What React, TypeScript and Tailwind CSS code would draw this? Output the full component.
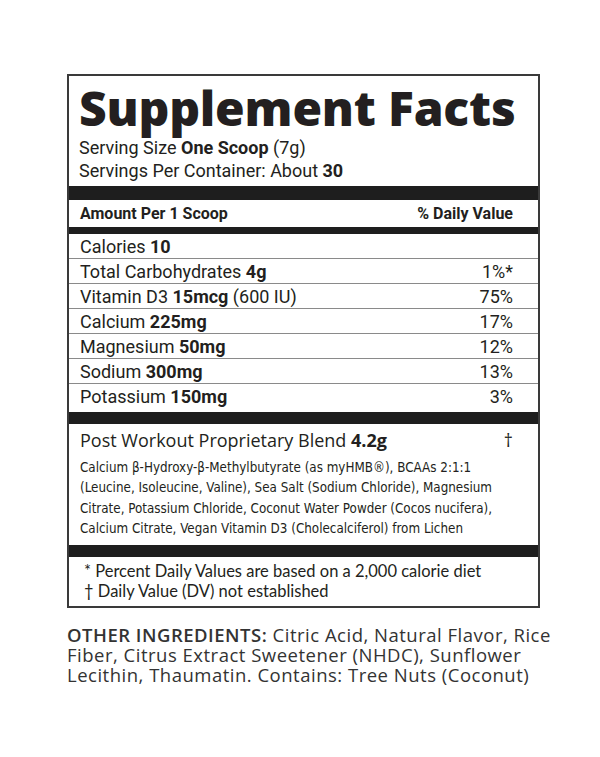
import React from 'react';

const nutrients = [
  { name: 'Calories', amount: '10', dv: '' },
  { name: 'Total Carbohydrates', amount: '4g', dv: '1%*' },
  { name: 'Vitamin D3', amount: '15mcg', extra: ' (600 IU)', dv: '75%' },
  { name: 'Calcium', amount: '225mg', dv: '17%' },
  { name: 'Magnesium', amount: '50mg', dv: '12%' },
  { name: 'Sodium', amount: '300mg', dv: '13%' },
  { name: 'Potassium', amount: '150mg', dv: '3%' },
];

const blendLines = [
  'Calcium β-Hydroxy-β-Methylbutyrate (as myHMB®), BCAAs 2:1:1',
  '(Leucine, Isoleucine, Valine), Sea Salt (Sodium Chloride), Magnesium',
  'Citrate, Potassium Chloride, Coconut Water Powder (Cocos nucifera),',
  'Calcium Citrate, Vegan Vitamin D3 (Cholecalciferol) from Lichen',
];

const App: React.FC = () => {
  return (
    <div className="min-h-[757px] bg-white pt-[74px] pl-[67px] text-[#231f20]">
      <div className="w-[473px] border-2 border-[#3a3a3a] font-['Roboto',sans-serif]">
        {/* title block */}
        <div className="px-[10px] pt-[6px] pb-[4px]">
          <h1 className="font-['Open_Sans',sans-serif] font-extrabold text-[48px] leading-[52px] tracking-[-0.2px] whitespace-nowrap">
            Supplement Facts
          </h1>
          <div className="text-[18px] leading-[23px] mt-[2px]">
            Serving Size <span className="font-bold">One Scoop</span> (7g)
          </div>
          <div className="text-[18px] leading-[23px]">
            Servings Per Container: About <span className="font-bold">30</span>
          </div>
        </div>

        <div className="h-[14px] bg-[#1e1e1e]" />

        <div className="flex justify-between items-center h-[27px] pl-[11px] pr-[25px] text-[16px] font-bold">
          <span>Amount Per 1 Scoop</span>
          <span>% Daily Value</span>
        </div>

        <div className="h-[7px] bg-[#1e1e1e]" />

        {nutrients.map((n, i) => (
          <div
            key={n.name}
            className={`flex justify-between items-center h-[25px] pl-[11px] pr-[25px] text-[18px] ${
              i < nutrients.length - 1 ? 'border-b border-[#8a8a8a]' : ''
            }`}
          >
            <span>
              {n.name} <span className="font-bold">{n.amount}</span>
              {n.extra}
            </span>
            <span>{n.dv}</span>
          </div>
        ))}

        <div className="h-[12px] mt-[3px] bg-[#1e1e1e]" />

        {/* blend */}
        <div className="pl-[11px] pr-[25px] pt-[4px] pb-[6px]">
          <div className="flex justify-between text-[18px] leading-[24px] font-['Open_Sans',sans-serif]">
            <span>
              Post Workout Proprietary Blend <span className="font-bold">4.2g</span>
            </span>
            <span>†</span>
          </div>
          <div className="mt-[6px] text-[13.3px] leading-[20.3px] whitespace-nowrap font-['DejaVu_Sans',sans-serif] [font-stretch:condensed]">
            {blendLines.map((l) => (
              <div key={l}>{l}</div>
            ))}
          </div>
        </div>

        <div className="h-[12px] bg-[#1e1e1e]" />

        <div className="pl-[15px] pt-[5px] pb-[5px] text-[16.5px] leading-[19.5px] font-['Lato',sans-serif]">
          <div>* Percent Daily Values are based on a 2,000 calorie diet</div>
          <div>† Daily Value (DV) not established</div>
        </div>
      </div>

      <div className="mt-[17px] text-[18.5px] leading-[20px] tracking-[0.5px] text-[#333] whitespace-nowrap font-['Open_Sans',sans-serif]">
        <div>
          <span className="font-semibold">OTHER INGREDIENTS:</span> Citric Acid, Natural Flavor, Rice
        </div>
        <div>Fiber, Citrus Extract Sweetener (NHDC), Sunflower</div>
        <div>Lecithin, Thaumatin. Contains: Tree Nuts (Coconut)</div>
      </div>
    </div>
  );
};

export default App;
